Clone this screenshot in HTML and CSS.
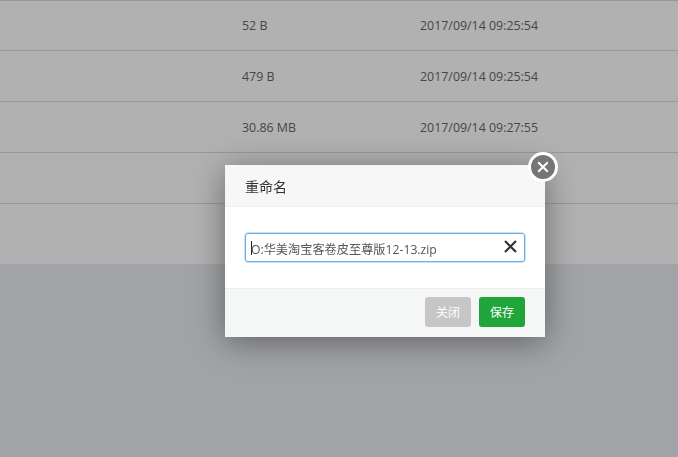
FILE: index.html
```html
<!DOCTYPE html>
<html lang="zh-CN">
<head>
<meta charset="utf-8">
<title>重命名</title>
<link rel="stylesheet" href="styles.css">
</head>
<body>
<main class="page">
  <div class="files">
    <div class="row row-first"><span class="size">52 B</span><span class="date">2017/09/14 09:25:54</span></div>
    <div class="row"><span class="size">479 B</span><span class="date">2017/09/14 09:25:54</span></div>
    <div class="row"><span class="size">30.86 MB</span><span class="date">2017/09/14 09:27:55</span></div>
    <div class="row"></div>
    <div class="row row-last"></div>
  </div>
</main>
<div class="overlay"></div>
<section class="modal">
  <button class="dismiss" type="button" aria-label="关闭">
    <svg viewBox="0 0 12 12" width="12" height="12"><path d="M1.2 1.2 10.8 10.8M10.8 1.2 1.2 10.8" fill="none" stroke="#fff" stroke-width="2"/></svg>
  </button>
  <header class="modal-head">重命名</header>
  <div class="modal-body">
    <div class="field">
      <span class="caret"></span>
      <span class="field-text">O:华美淘宝客卷皮至尊版12-13.zip</span>
      <svg class="clear" viewBox="0 0 13 13" width="13" height="13"><path d="M1 1 12 12M12 1 1 12" fill="none" stroke="#333" stroke-width="2.2"/></svg>
    </div>
  </div>
  <footer class="modal-foot">
    <button class="btn btn-off" type="button">关闭</button>
    <button class="btn btn-save" type="button">保存</button>
  </footer>
</section>
</body>
</html>
```
FILE: styles.css
```css
html, body {
  margin: 0;
  height: 100%;
  overflow: hidden;
}
body {
  background: #eaebef;
  font-family: "Open Sans", "Noto Sans CJK SC", sans-serif;
  font-size: 12px;
  color: #666;
}
.files {
  background: #fff;
  font-size: 12.4px;
}
.row {
  display: flex;
  align-items: center;
  height: 50px;
  border-top: 1px solid #dcdcdc;
  padding-left: 242px;
}
.row-first {
  height: 49px;
}
.row-last {
  height: 60px;
}
.size {
  width: 178px;
}
.overlay {
  position: fixed;
  inset: 0;
  background: rgba(0, 0, 0, 0.306);
}
.modal {
  position: absolute;
  left: 225px;
  top: 165px;
  width: 320px;
  height: 172px;
  display: flex;
  flex-direction: column;
  background: #fff;
  box-shadow: 0 5px 30px rgba(0, 0, 0, 0.4);
}
.dismiss {
  position: absolute;
  right: -13px;
  top: -13px;
  width: 30px;
  height: 30px;
  padding: 0;
  border: 3px solid #fff;
  border-radius: 50%;
  background: #757575;
  display: flex;
  align-items: center;
  justify-content: center;
}
.modal-head {
  height: 41px;
  line-height: 44px;
  padding-left: 20px;
  background: #f7f7f7;
  border-bottom: 1px solid #eee;
  font-size: 14px;
  color: #333;
}
.modal-body {
  flex: 1;
  padding: 26px 20px 0;
}
.field {
  display: flex;
  align-items: center;
  height: 27px;
  padding: 0 7px 0 5px;
  border: 1px solid #66afe9;
  border-radius: 3px;
  box-shadow: 0 0 0 0.5px rgba(102, 175, 233, 0.7);
  font-size: 12.2px;
  color: #555;
}
.caret {
  width: 1px;
  height: 14px;
  background: #222;
  margin-right: -1px;
}
.field-text {
  flex: 1;
  padding-top: 2px;
}
.clear {
  margin-top: -2px;
}
.modal-foot {
  height: 49px;
  display: flex;
  justify-content: flex-end;
  align-items: flex-start;
  gap: 8px;
  padding: 8px 20px 0;
  box-sizing: border-box;
  background: #f5f7f7;
  border-top: 1px solid #eceeee;
}
.btn {
  width: 46px;
  height: 30px;
  padding: 0;
  border: 0;
  border-radius: 3px;
  color: #fff;
  font: inherit;
}
.btn-off {
  background: #c6c6c6;
}
.btn-save {
  background: #20a53a;
}
```
